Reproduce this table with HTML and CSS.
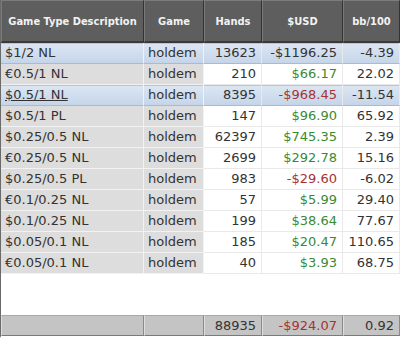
FILE: index.html
```html
<!DOCTYPE html>
<html>
<head>
<meta charset="utf-8">
<link rel="stylesheet" href="styles.css">
</head>
<body>
<div class="frame">
<table class="data">
  <colgroup>
    <col class="c1"><col class="c2"><col class="c3"><col class="c4"><col class="c5">
  </colgroup>
  <thead>
    <tr><th>Game Type Description</th><th>Game</th><th>Hands</th><th>$USD</th><th>bb/100</th></tr>
  </thead>
  <tbody>
    <tr class="hl"><td class="txt">$1/2 NL</td><td class="txt">holdem</td><td class="num">13623</td><td class="num">-$1196.25</td><td class="num">-4.39</td></tr>
    <tr><td class="txt">€0.5/1 NL</td><td class="txt">holdem</td><td class="num">210</td><td class="num pos">$66.17</td><td class="num">22.02</td></tr>
    <tr class="hl"><td class="txt link">$0.5/1 NL</td><td class="txt">holdem</td><td class="num">8395</td><td class="num neg">-$968.45</td><td class="num">-11.54</td></tr>
    <tr><td class="txt">$0.5/1 PL</td><td class="txt">holdem</td><td class="num">147</td><td class="num pos">$96.90</td><td class="num">65.92</td></tr>
    <tr><td class="txt">$0.25/0.5 NL</td><td class="txt">holdem</td><td class="num">62397</td><td class="num pos">$745.35</td><td class="num">2.39</td></tr>
    <tr><td class="txt">€0.25/0.5 NL</td><td class="txt">holdem</td><td class="num">2699</td><td class="num pos">$292.78</td><td class="num">15.16</td></tr>
    <tr><td class="txt">$0.25/0.5 PL</td><td class="txt">holdem</td><td class="num">983</td><td class="num neg">-$29.60</td><td class="num">-6.02</td></tr>
    <tr><td class="txt">€0.1/0.25 NL</td><td class="txt">holdem</td><td class="num">57</td><td class="num pos">$5.99</td><td class="num">29.40</td></tr>
    <tr><td class="txt">$0.1/0.25 NL</td><td class="txt">holdem</td><td class="num">199</td><td class="num pos">$38.64</td><td class="num">77.67</td></tr>
    <tr><td class="txt">$0.05/0.1 NL</td><td class="txt">holdem</td><td class="num">185</td><td class="num pos">$20.47</td><td class="num">110.65</td></tr>
    <tr><td class="txt">€0.05/0.1 NL</td><td class="txt">holdem</td><td class="num">40</td><td class="num pos">$3.93</td><td class="num">68.75</td></tr>
  </tbody>
  <tbody class="spacer">
    <tr><td colspan="5"></td></tr>
  </tbody>
  <tfoot>
    <tr><td></td><td></td><td class="num">88935</td><td class="num neg">-$924.07</td><td class="num">0.92</td></tr>
  </tfoot>
</table>
</div>
</body>
</html>
```
FILE: styles.css
```css
html, body {
  margin: 0;
  padding: 0;
  background: #ffffff;
}

.frame {
  width: 400px;
  height: 338px;
  overflow: hidden;
}

.data {
  width: 400px;
  table-layout: fixed;
  border-collapse: separate;
  border-spacing: 0;
  font-family: "DejaVu Sans", Verdana, sans-serif;
  font-size: 13px;
  color: #333333;
  border-left: 1px solid #6a6a6a;
  border-bottom: 2px solid #ffffff;
  box-sizing: border-box;
}

.c1 { width: 143px; }
.c2 { width: 60px; }
.c3 { width: 58px; }
.c4 { width: 81px; }
.c5 { width: 57px; }

thead th {
  height: 40px;
  padding: 0 2px;
  background: #5e5e5e;
  color: #f2f2f2;
  font-family: "DejaVu Sans Condensed", "DejaVu Sans", sans-serif;
  font-weight: bold;
  font-size: 11px;
  text-align: center;
  vertical-align: middle;
  border-top: 1px solid #7c7c7c;
  border-left: 1px solid #7a7a7a;
  border-right: 1px solid #333333;
  border-bottom: 2px solid #3a3a3a;
  white-space: nowrap;
}

tbody td {
  height: 20px;
  padding: 0 5px 0 4px;
  border-right: 1px solid #e9e9e9;
  border-bottom: 1px solid #e9e9e9;
  background: #ffffff;
  white-space: nowrap;
  line-height: 20px;
}

tbody td.txt {
  background: #dddddd;
  border-right-color: #f2f2f2;
  border-bottom-color: #f2f2f2;
}

.num { text-align: right; }

.pos { color: #3a8a33; }
.neg { color: #a83232; }

tbody tr.hl td {
  background: linear-gradient(#dde7f3, #c5d5e9);
  border-bottom-color: #a8bbd3;
  box-shadow: inset 0 1px 0 #b4c6dc;
}

tbody tr.hl td.link {
  text-decoration: underline;
}

.spacer td {
  height: 41px;
  padding: 0;
  background: #ffffff;
  border: none;
}

tfoot td {
  height: 19px;
  padding: 0 5px 0 4px;
  background: #c4c4c4;
  border-top: 1px solid #a8a8a8;
  border-bottom: 1px solid #7a7a7a;
  border-left: 1px solid #dedede;
  border-right: 1px solid #8a8a8a;
  line-height: 19px;
  white-space: nowrap;
}
```
